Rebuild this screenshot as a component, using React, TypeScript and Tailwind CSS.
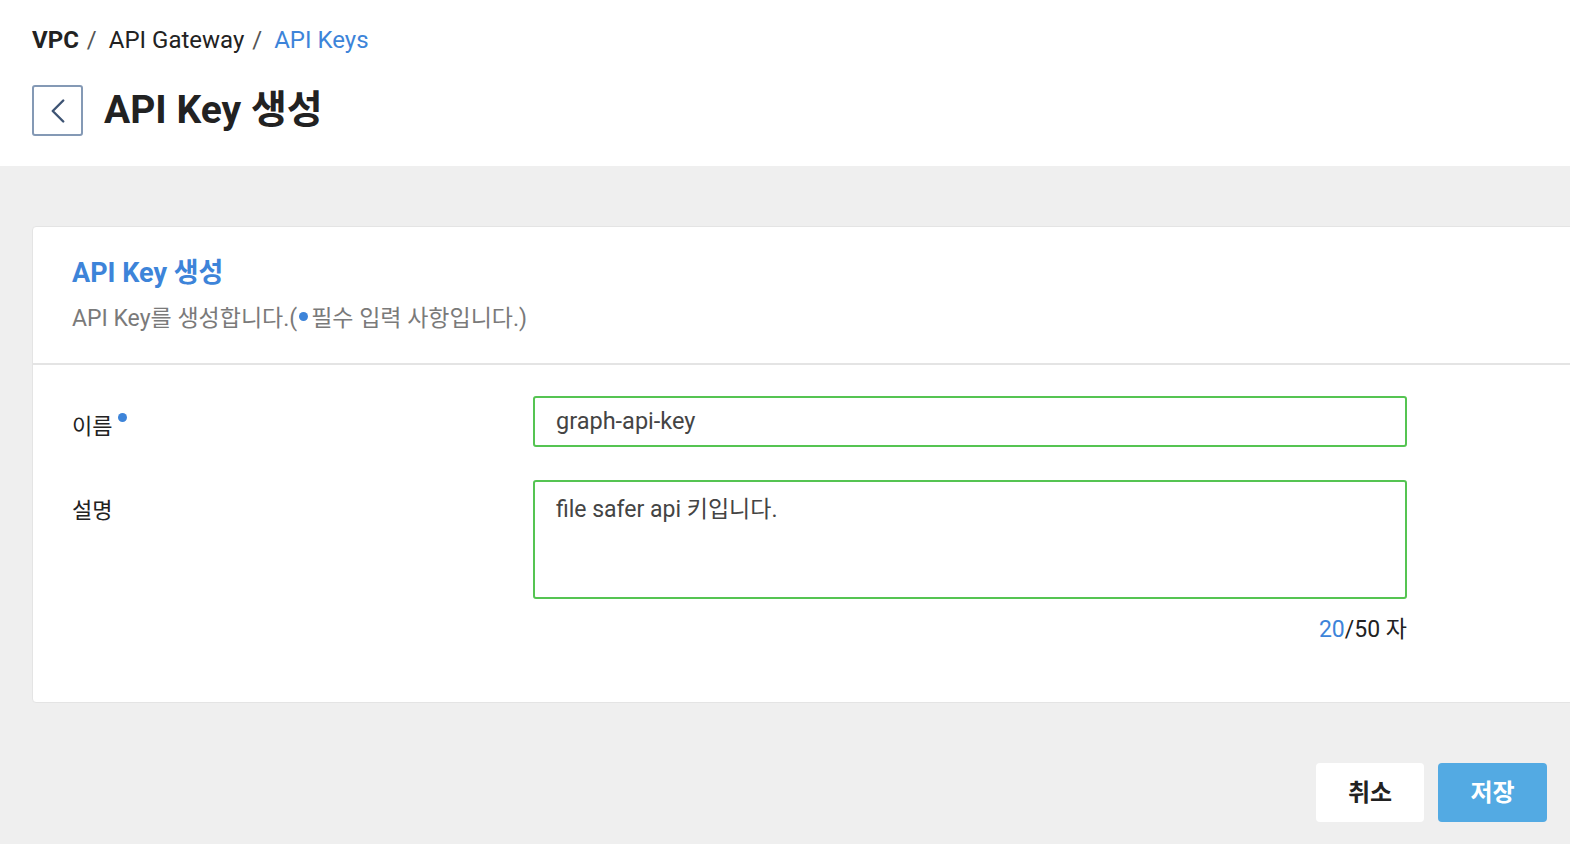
import { ChevronLeft } from "lucide-react";

const font = "font-['Roboto','Noto_Sans_CJK_KR',sans-serif]";

function Breadcrumb() {
  return (
    <nav className="flex items-center text-[24px] leading-none text-[#222]">
      <span className="font-bold">VPC</span>
      <span className="mx-2 text-[#555]">/</span>
      <span className="ml-1">API Gateway</span>
      <span className="mx-2 text-[#555]">/</span>
      <span className="ml-1 text-[#3d84d9]">API Keys</span>
    </nav>
  );
}

function Field({
  label,
  required,
  children,
}: {
  label: string;
  required?: boolean;
  children: React.ReactNode;
}) {
  return (
    <div className="flex items-start">
      <div className="relative w-[461px] shrink-0 pt-[18px] text-[22px] leading-[26px] text-[#222]">
        <span>{label}</span>
        {required && (
          <span className="absolute top-[17px] ml-[6px] inline-block h-[9px] w-[9px] rounded-full bg-[#3d84d9]" />
        )}
      </div>
      <div className="w-[874px]">{children}</div>
    </div>
  );
}

export default function App() {
  return (
    <div className={`${font} min-h-[844px] overflow-hidden bg-[#efefef]`}>
      <header className="h-[166px] bg-white px-8 pt-[28px]">
        <Breadcrumb />
        <div className="mt-[33px] flex items-center gap-[21px]">
          <button className="flex h-[51px] w-[51px] items-center justify-center rounded-[3px] border-2 border-[#8499b5] text-[#3e5474]">
            <ChevronLeft size={42} strokeWidth={1.4} />
          </button>
          <h1 className="text-[39px] font-bold leading-none text-[#222]">API Key 생성</h1>
        </div>
      </header>

      <main className="pt-[60px]">
        <section className="ml-8 mr-[-4px] rounded-l-[4px] border border-[#e4e4e4] bg-white">
          <div className="border-b-2 border-[#e4e4e4] px-[39px] pt-[30px] pb-[31px]">
            <h2 className="text-[27px] font-bold leading-[32px] text-[#3d84d9]">API Key 생성</h2>
            <p className="mt-[17px] flex items-center text-[23px] leading-[26px] text-[#7a7a7a]">
              API Key를 생성합니다.(
              <span className="mb-[6px] mr-[3px] ml-[2px] inline-block h-[9px] w-[9px] rounded-full bg-[#3d84d9]" />
              필수 입력 사항입니다.)
            </p>
          </div>

          <div className="flex flex-col gap-[33px] px-[39px] pt-[31px] pb-[57px]">
            <Field label="이름" required>
              <div className="flex h-[51px] items-center rounded-[3px] border-2 border-[#55c452] px-[21px] text-[23.5px] text-[#444]">
                graph-api-key
              </div>
            </Field>
            <Field label="설명">
              <div className="h-[119px] rounded-[3px] border-2 border-[#55c452] px-[21px] pt-[13px] text-[23px] leading-[30px] text-[#444]">
                file safer api 키입니다.
              </div>
              <div className="mt-[16px] text-right text-[23px] leading-[30px] text-[#222]">
                <span className="text-[#3d84d9]">20</span>/50 자
              </div>
            </Field>
          </div>
        </section>

        <div className="flex justify-end gap-[14px] pr-[23px] pt-[60px]">
          <button className="h-[59px] w-[108px] rounded-[4px] bg-white text-[24px] font-bold text-[#222]">
            취소
          </button>
          <button className="h-[59px] w-[109px] rounded-[4px] bg-[#53aae3] text-[24px] font-bold text-white">
            저장
          </button>
        </div>
      </main>
    </div>
  );
}
